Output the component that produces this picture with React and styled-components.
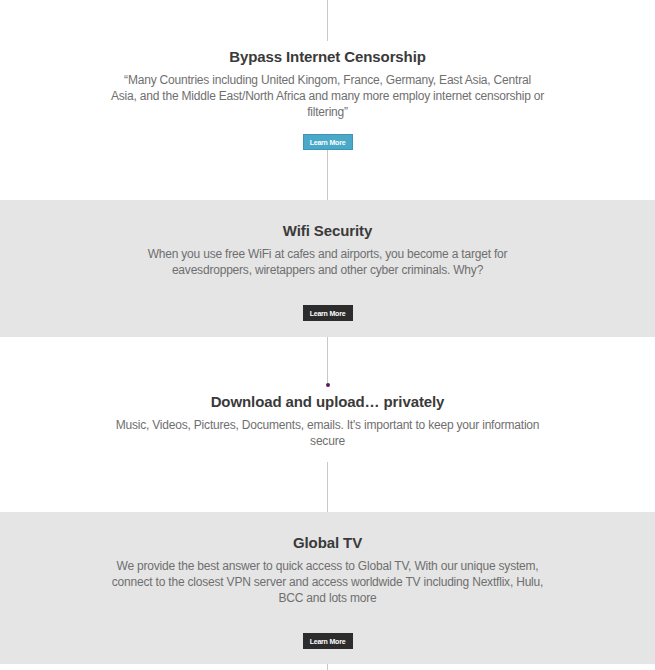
import React from "react";
import styled, { createGlobalStyle } from "styled-components";

const GlobalStyle = createGlobalStyle`
  html, body {
    margin: 0;
    padding: 0;
    background: #ffffff;
  }
  body {
    font-family: "Liberation Sans", Arial, sans-serif;
  }
`;

const sections = [
  {
    title: "Bypass Internet Censorship",
    text: (
      <>
        “Many Countries including United Kingom, France, Germany, East Asia, Central
        <br />
        Asia, and the Middle East/North Africa and many more employ internet censorship or filtering”
      </>
    ),
  },
  {
    title: "Wifi Security",
    text: "When you use free WiFi at cafes and airports, you become a target for eavesdroppers, wiretappers and other cyber criminals. Why?",
  },
  {
    title: "Download and upload… privately",
    text: "Music, Videos, Pictures, Documents, emails. It's important to keep your information secure",
  },
  {
    title: "Global TV",
    text: "We provide the best answer to quick access to Global TV, With our unique system, connect to the closest VPN server and access worldwide TV including Nextflix, Hulu, BCC and lots more",
  },
];

export default function App() {
  return (
    <>
      <GlobalStyle />
      <Page>
        <Section $tone="white">
          <Connector $h={41} />
          <Title $mt={6}>{sections[0].title}</Title>
          <Body>{sections[0].text}</Body>
          <LearnMore $variant="blue" $mt={14}>Learn More</LearnMore>
          <Connector $h={50} />
        </Section>

        <Section $tone="gray" $pt={21} $pb={16}>
          <Title>{sections[1].title}</Title>
          <Body>{sections[1].text}</Body>
          <LearnMore $variant="dark" $mt={27}>Learn More</LearnMore>
        </Section>

        <Section $tone="white">
          <Connector $h={46} />
          <Dot />
          <Title $mt={5}>{sections[2].title}</Title>
          <Body>{sections[2].text}</Body>
          <Connector $h={50} $mt={13} />
        </Section>

        <Section $tone="gray" $pt={21} $pb={15}>
          <Title>{sections[3].title}</Title>
          <Body>{sections[3].text}</Body>
          <LearnMore $variant="dark" $mt={27}>Learn More</LearnMore>
        </Section>

        <Section $tone="white">
          <Connector $h={20} />
        </Section>
      </Page>
    </>
  );
}

const Page = styled.div`
  width: 655px;
  display: flex;
  flex-direction: column;
`;

const Section = styled.section`
  display: flex;
  flex-direction: column;
  align-items: center;
  padding: ${(p) => p.$pt || 0}px 0 ${(p) => p.$pb || 0}px;
  background: ${(p) => (p.$tone === "gray" ? "#e5e5e5" : "#ffffff")};
`;

const Connector = styled.div`
  width: 1px;
  height: ${(p) => p.$h}px;
  margin-top: ${(p) => p.$mt || 0}px;
  background: #c8c8c8;
`;

const Dot = styled.div`
  width: 4px;
  height: 4px;
  border-radius: 50%;
  background: #5b1a5e;
`;

const Title = styled.h2`
  margin: ${(p) => p.$mt || 0}px 0 0;
  font-size: 15px;
  line-height: 20px;
  font-weight: bold;
  letter-spacing: -0.1px;
  color: #3a3a3a;
  text-align: center;
`;

const Body = styled.p`
  margin: 5px 0 0;
  width: 437px;
  font-size: 12px;
  line-height: 16px;
  letter-spacing: -0.2px;
  color: #6f6f6f;
  text-align: center;
`;

const LearnMore = styled.button`
  margin-top: ${(p) => p.$mt || 0}px;
  width: 50px;
  height: 16px;
  padding: 0;
  font-family: "Liberation Sans", Arial, sans-serif;
  font-size: 7px;
  font-weight: bold;
  letter-spacing: -0.2px;
  color: #ffffff;
  cursor: pointer;
  background: ${(p) => (p.$variant === "blue" ? "#4aa9c8" : "#2c2c2c")};
  border: 1px solid ${(p) => (p.$variant === "blue" ? "#3b95b3" : "#2c2c2c")};
`;
